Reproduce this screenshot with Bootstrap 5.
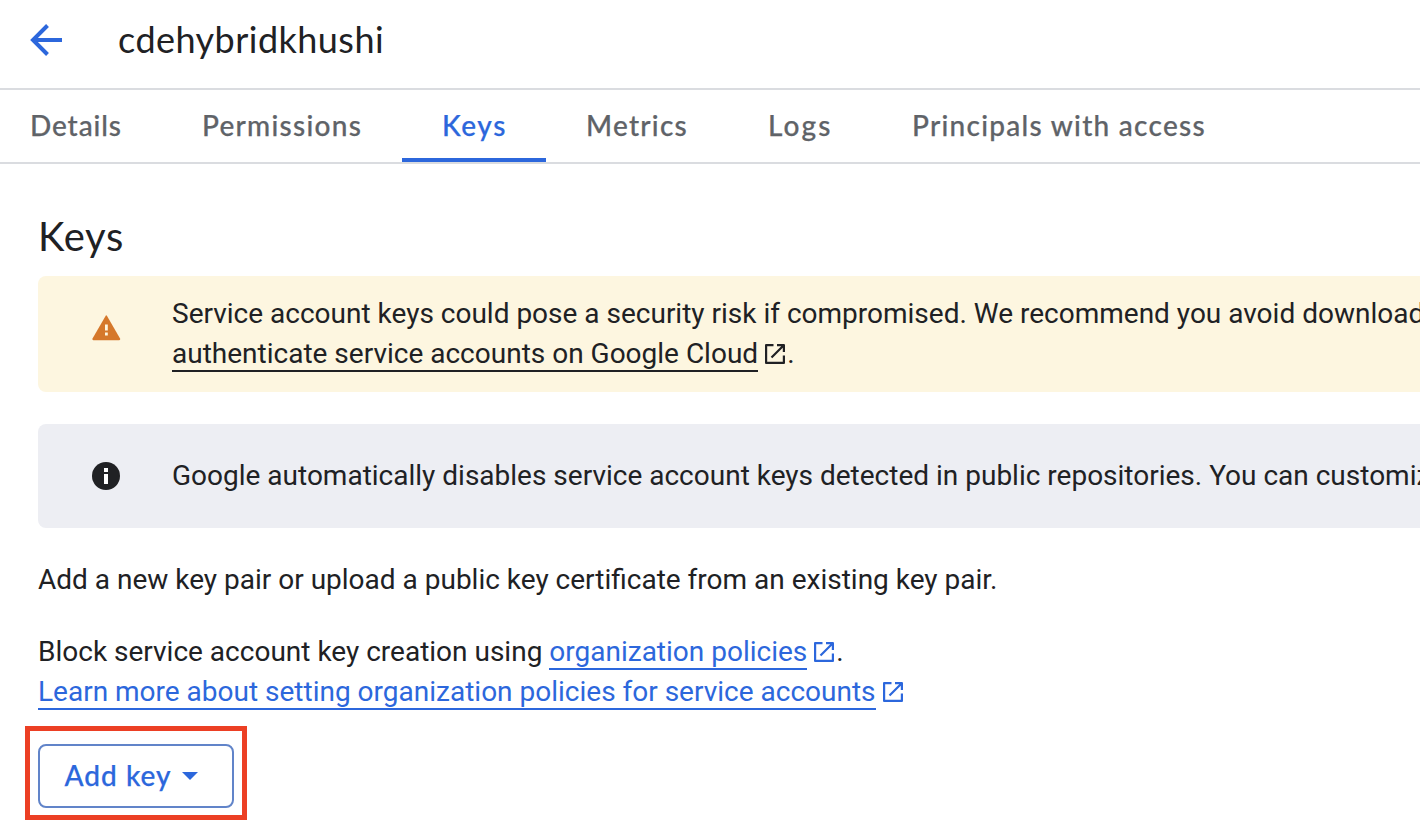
<!DOCTYPE html>
<html lang="en">
<head>
<meta charset="utf-8">
<meta name="viewport" content="width=device-width, initial-scale=1">
<title>cdehybridkhushi – Keys</title>
<link href="https://cdn.jsdelivr.net/npm/bootstrap@5.3.0/dist/css/bootstrap.min.css" rel="stylesheet">
<style>
body{font-family:Roboto,sans-serif;font-size:28px;line-height:40px;color:#202124;background:#fff;height:824px}
.display-face{font-family:Lato,sans-serif}
.top-bar{height:90px;padding:0 0 9px 30px;border-bottom:2px solid #dadce0}
.top-bar h1{font-size:36px;line-height:44px;letter-spacing:.46px;margin-left:55px;padding-bottom:2px}
.tab-row{height:74px;padding-left:22px;margin-left:-32px;border-bottom:2px solid #dadce0}
.tab-row .nav-link{height:72px;padding:0 40px;color:#5f6368;font-weight:500;-webkit-text-stroke:.25px;line-height:71px;letter-spacing:1.27px;border-radius:0;white-space:nowrap}
.tab-row .nav-link.active{color:#2c67dc;border-bottom:4px solid #2c67dc}
.tab-row .t-details{width:172px;letter-spacing:.9px}
.tab-row .t-perm{width:240px}
.tab-row .t-keys{width:144px;letter-spacing:1.6px}
.tab-row .t-metrics{width:182px}
.tab-row .t-logs{width:144px;letter-spacing:2.1px}
.page-body{padding:48px 0 0 38px}
.page-body h2{font-size:40px;line-height:48px;letter-spacing:.7px;margin-bottom:16px}
.notice{border-radius:8px 0 0 8px;padding-left:52px;white-space:nowrap;overflow:hidden}
.notice>svg{flex:none;margin-right:50px}
.notice-warn{height:116px;background:#fdf6e0}
.notice-warn>svg{margin-top:-14px}
.notice-info{height:104px;background:#edeef3}
.gap-above{margin-top:32px}
.doc-link{color:#2c67dc;text-decoration:none;border-bottom:2px solid}
.doc-link.on-warn{color:#202124}
.ext{width:20px;height:20px;margin:0 2px 0 7px;vertical-align:-1px;fill:none;stroke:#2c67dc;stroke-width:2.2;stroke-linejoin:round}
.ext.on-warn{stroke:#202124}
.btn-key{width:196px;height:64px;border:2px solid #6184c9;border-radius:8px;color:#2c67dc;font-size:28px;font-weight:500;-webkit-text-stroke:.25px;letter-spacing:1.02px;padding:0 0 0 24.5px;line-height:58px}
.btn-key span{padding-bottom:2px}
.btn-key svg{margin-left:10px}
.callout-box{left:-13px;top:-18px;width:222px;height:94px;border:5px solid #ec3f24;pointer-events:none}
</style>
</head>
<body class="overflow-hidden">
<header class="top-bar d-flex align-items-center">
  <svg width="33" height="34" viewBox="0 0 33 34" fill="none" stroke="#2c67dc" stroke-width="4"><path d="M32 17H3M17.500 2.500 3 17l14.500 14.500"/></svg>
  <h1 class="display-face fw-normal mb-0">cdehybridkhushi</h1>
</header>
<nav class="tab-row nav flex-nowrap display-face">
  <a class="nav-link t-details" href="#">Details</a>
  <a class="nav-link t-perm" href="#">Permissions</a>
  <a class="nav-link t-keys active" href="#">Keys</a>
  <a class="nav-link t-metrics" href="#">Metrics</a>
  <a class="nav-link t-logs" href="#">Logs</a>
  <a class="nav-link" href="#">Principals with access</a>
</nav>
<main class="page-body">
  <h2 class="display-face fw-normal">Keys</h2>
  <div class="notice notice-warn d-flex align-items-center">
    <svg width="32" height="32" viewBox="0 0 32 32"><path fill="#d5782b" d="M15.700 4.700q.6-.9 1.200 0L30.200 27.800q.3 1.300-1 1.400H3.400q-1.300-.1-1-1.400Z"/><path fill="#fdf6e0" d="M15 13.500h2.800v6H15zM15 21.500h2.800v3H15z"/></svg>
    <div>Service account keys could pose a security risk if compromised. We recommend you avoid download<br><a class="doc-link on-warn" href="#">authenticate service accounts on Google Cloud</a><svg class="ext on-warn" viewBox="0 0 20 20"><path d="M8.500 1.100H1.100v17.800h17.800V11.500M12 1.100h6.900V8M18.500 1.500 6.500 13.500"/></svg>.</div>
  </div>
  <div class="notice notice-info gap-above d-flex align-items-center">
    <svg width="32" height="32" viewBox="0 0 32 32"><circle cx="16" cy="16" r="14" fill="#202124"/><path fill="#fff" d="M14 8h4v4h-4zM14 14h4v10h-4z"/></svg>
    <div>Google automatically disables service account keys detected in public repositories. You can customiz</div>
  </div>
  <p class="mb-0 gap-above">Add a new key pair or upload a public key certificate from an existing key pair.</p>
  <p class="mb-0 gap-above">Block service account key creation using <a class="doc-link" href="#">organization policies</a><svg class="ext" viewBox="0 0 20 20"><path d="M8.500 1.100H1.100v17.800h17.800V11.500M12 1.100h6.900V8M18.500 1.500 6.500 13.500"/></svg>.<br><a class="doc-link" href="#">Learn more about setting organization policies for service accounts</a><svg class="ext" viewBox="0 0 20 20"><path d="M8.500 1.100H1.100v17.800h17.800V11.500M12 1.100h6.900V8M18.500 1.500 6.500 13.500"/></svg></p>
  <div class="position-relative d-inline-flex align-top gap-above">
    <button type="button" class="btn btn-key display-face d-flex align-items-center"><span>Add key</span><svg width="16" height="8" viewBox="0 0 16 8"><path fill="#2c67dc" d="M0 0h16L8 8z"/></svg></button>
    <span class="callout-box position-absolute"></span>
  </div>
</main>
<script src="https://cdn.jsdelivr.net/npm/bootstrap@5.3.0/dist/js/bootstrap.bundle.min.js"></script>
</body>
</html>
